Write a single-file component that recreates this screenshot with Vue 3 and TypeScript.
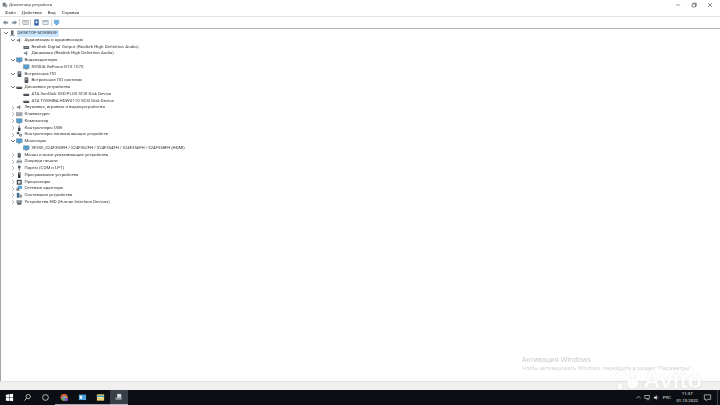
<script setup lang="ts">
type Row = { label: string; level: number; arrow: '' | 'open' | 'closed'; icon: string; selected?: boolean; spacing?: number }

const rows: Row[] = [
  { label: 'DESKTOP-M2K8NSF', level: 0, arrow: 'open', icon: 'pc', selected: true },
  { label: 'Аудиовходы и аудиовыходы', level: 1, arrow: 'open', icon: 'audio' },
  { label: 'Realtek Digital Output (Realtek High Definition Audio)', level: 2, arrow: '', icon: 'speaker', spacing: 0.07 },
  { label: 'Динамики (Realtek High Definition Audio)', level: 2, arrow: '', icon: 'audio' },
  { label: 'Видеоадаптеры', level: 1, arrow: 'open', icon: 'monitor' },
  { label: 'NVIDIA GeForce GTX 1070', level: 2, arrow: '', icon: 'monitor' },
  { label: 'Встроенное ПО', level: 1, arrow: 'open', icon: 'chip' },
  { label: 'Встроенное ПО системы', level: 2, arrow: '', icon: 'chip' },
  { label: 'Дисковые устройства', level: 1, arrow: 'open', icon: 'disk' },
  { label: 'ATA SanDisk SSD PLUS SCSI Disk Device', level: 2, arrow: '', icon: 'disk' },
  { label: 'ATA TOSHIBA HDWD110 SCSI Disk Device', level: 2, arrow: '', icon: 'disk' },
  { label: 'Звуковые, игровые и видеоустройства', level: 1, arrow: 'closed', icon: 'audio' },
  { label: 'Клавиатуры', level: 1, arrow: 'closed', icon: 'keyboard' },
  { label: 'Компьютер', level: 1, arrow: 'closed', icon: 'monitor' },
  { label: 'Контроллеры USB', level: 1, arrow: 'closed', icon: 'usb' },
  { label: 'Контроллеры запоминающих устройств', level: 1, arrow: 'closed', icon: 'storage' },
  { label: 'Мониторы', level: 1, arrow: 'open', icon: 'monitor' },
  { label: 'SF350_S24F350FH / S24F352FH / S24F354FH / S24F356FH / S24F358FH (HDMI)', level: 2, arrow: '', icon: 'monitor', spacing: -0.1 },
  { label: 'Мыши и иные указывающие устройства', level: 1, arrow: 'closed', icon: 'mouse' },
  { label: 'Очереди печати', level: 1, arrow: 'closed', icon: 'printer' },
  { label: 'Порты (COM и LPT)', level: 1, arrow: 'closed', icon: 'port' },
  { label: 'Программные устройства', level: 1, arrow: 'closed', icon: 'software' },
  { label: 'Процессоры', level: 1, arrow: 'closed', icon: 'cpu' },
  { label: 'Сетевые адаптеры', level: 1, arrow: 'closed', icon: 'network' },
  { label: 'Системные устройства', level: 1, arrow: 'closed', icon: 'system' },
  { label: 'Устройства HID (Human Interface Devices)', level: 1, arrow: 'closed', icon: 'hid' }
]

const menu = ['Файл', 'Действие', 'Вид', 'Справка']
</script>

<template>
  <div class="screen">
    <div class="window">
      <header class="titlebar">
        <svg class="title-icon" viewBox="0 0 8 8">
          <rect x="1" y="1" width="4" height="5" fill="#6f7780" />
          <rect x="4" y="3" width="3" height="4" fill="#9aa3ad" />
        </svg>
        <span class="title-text">Диспетчер устройств</span>
        <div class="controls">
          <svg viewBox="0 0 8 8"><path d="M1 4h6" stroke="#8a8a8a" stroke-width="1" /></svg>
          <svg viewBox="0 0 8 8"><path d="M1.5 2.5h4.500v4h-4.500zM3 2.500v-1h4v4h-1" fill="none" stroke="#555" stroke-width=".9" /></svg>
          <svg viewBox="0 0 8 8"><path d="M1.500 1.500l5 5M6.500 1.500l-5 5" stroke="#555" stroke-width=".9" /></svg>
        </div>
      </header>

      <nav class="menubar">
        <span v-for="m in menu" :key="m">{{ m }}</span>
      </nav>

      <div class="toolbar">
        <svg viewBox="0 0 8 8"><path d="M1 4l3-2.500v1.500h3v2h-3v1.500z" fill="#7b8791" /></svg>
        <svg viewBox="0 0 8 8"><path d="M7 4l-3-2.500v1.500h-3v2h3v1.500z" fill="#7b8791" /></svg>
        <i class="sep"></i>
        <svg viewBox="0 0 8 8"><rect x="1" y="1.500" width="6" height="5" fill="#f2f2f2" stroke="#8d949b" stroke-width=".7" /><path d="M2 3h4M2 4.500h4" stroke="#9aa1a8" stroke-width=".6" /></svg>
        <i class="sep"></i>
        <svg viewBox="0 0 8 8"><rect x="1.500" y=".5" width="5" height="7" fill="#2f5ea8" /><rect x="3" y="2" width="2" height="3" fill="#d7e3f5" /></svg>
        <svg viewBox="0 0 8 8"><rect x="1" y="1.500" width="6" height="5" fill="#eef1f4" stroke="#8d949b" stroke-width=".7" /><path d="M2 3h4" stroke="#5f93c9" stroke-width=".8" /></svg>
        <i class="sep"></i>
        <svg viewBox="0 0 8 8"><rect x="1" y="1" width="6" height="4.500" fill="#6bb3e0" /><rect x="3" y="5.500" width="2" height="1.500" fill="#3d86bd" /></svg>
      </div>

      <div class="tree">
        <div v-for="(r, i) in rows" :key="i" class="row" :class="'level-' + r.level">
          <span class="arrow">
            <svg v-if="r.arrow === 'open'" viewBox="0 0 6 6"><path d="M1 2l2 2 2-2" fill="none" stroke="#555" stroke-width=".8" /></svg>
            <svg v-else-if="r.arrow === 'closed'" viewBox="0 0 6 6"><path d="M2 1l2 2-2 2" fill="none" stroke="#a6a6a6" stroke-width=".8" /></svg>
          </span>
          <svg class="icon" viewBox="0 0 8 8">
            <template v-if="r.icon === 'pc'"><rect x="2.500" y=".5" width="3" height="5.500" fill="#5f6870" /><rect x="1" y="6" width="6" height="1.500" fill="#a9b1b9" /></template>
            <template v-else-if="r.icon === 'audio'"><path d="M1 3h2l2-2v6l-2-2h-2z" fill="#7d8790" /><path d="M6 2.500v3" stroke="#b9c0c7" stroke-width=".8" /></template>
            <template v-else-if="r.icon === 'speaker'"><rect x=".5" y="2.500" width="7" height="3.500" rx=".5" fill="#5b636b" /><rect x="2" y="3.500" width="4" height="1" fill="#aab2ba" /></template>
            <template v-else-if="r.icon === 'monitor'"><rect x=".5" y="1" width="7" height="4.800" fill="#4f9fd3" stroke="#6d7882" stroke-width=".5" /><rect x="3" y="5.800" width="2" height="1.400" fill="#7d8790" /></template>
            <template v-else-if="r.icon === 'chip'"><rect x="2" y=".5" width="4.500" height="7" fill="#4f565d" /><rect x="3" y="1.500" width="2.500" height="2" fill="#a8b0b7" /></template>
            <template v-else-if="r.icon === 'disk'"><rect x=".5" y="3.500" width="7" height="2.500" rx=".4" fill="#40464c" /><rect x="1" y="3" width="6" height="1" fill="#c3c8cd" /></template>
            <template v-else-if="r.icon === 'keyboard'"><rect x=".5" y="2" width="7" height="4" fill="#b7bdc3" stroke="#757d85" stroke-width=".5" /><path d="M1.500 3.500h5M1.500 4.800h5" stroke="#6f777f" stroke-width=".5" /></template>
            <template v-else-if="r.icon === 'usb'"><rect x="3" y=".5" width="2" height="2.500" fill="#9da4ab" /><rect x="2.500" y="3" width="3" height="4.500" rx=".6" fill="#3f454b" /></template>
            <template v-else-if="r.icon === 'storage'"><rect x="1" y="1" width="3" height="3" fill="#5a6269" /><circle cx="5.500" cy="5" r="2" fill="#7b848c" /><circle cx="5.500" cy="5" r=".7" fill="#dfe3e6" /></template>
            <template v-else-if="r.icon === 'mouse'"><rect x="2" y=".8" width="4" height="6.600" rx="1.800" fill="#5c646c" /><path d="M4 1v2" stroke="#cfd4d8" stroke-width=".5" /></template>
            <template v-else-if="r.icon === 'printer'"><rect x=".8" y="3" width="6.400" height="3" fill="#7b848c" /><rect x="2" y="1" width="4" height="2" fill="#d8dde1" /><rect x="2" y="5" width="4" height="2" fill="#f1f3f4" stroke="#7b848c" stroke-width=".3" /></template>
            <template v-else-if="r.icon === 'port'"><rect x="2.500" y=".8" width="3" height="3.500" fill="#525a61" /><path d="M4 4.300v3" stroke="#7b848c" stroke-width="1.200" /></template>
            <template v-else-if="r.icon === 'software'"><rect x="2.500" y=".5" width="3" height="7" fill="#2f353a" /><rect x="3.200" y="1.500" width="1.600" height="1.500" fill="#c3c8cd" /></template>
            <template v-else-if="r.icon === 'cpu'"><rect x="1" y="1" width="6" height="6" fill="#3f464c" /><rect x="2.500" y="2.500" width="3" height="3" fill="#e8ecef" /></template>
            <template v-else-if="r.icon === 'network'"><rect x="2" y="1" width="5.500" height="3.800" fill="#58a7d8" /><rect x=".5" y="4" width="3.500" height="3" fill="#6f7880" /></template>
            <template v-else-if="r.icon === 'system'"><rect x="1" y="1" width="3" height="6" fill="#3e6f96" /><rect x="4" y="3" width="3.200" height="4" fill="#8b949c" /></template>
            <template v-else><rect x=".5" y="1.500" width="7" height="3.500" fill="#8c959d" /><rect x="1.500" y="5" width="5" height="2" fill="#4d555c" /></template>
          </svg>
          <span
            class="label"
            :class="{ selected: r.selected }"
            :style="r.spacing ? { letterSpacing: r.spacing + 'px' } : undefined"
          >{{ r.label }}</span>
        </div>
      </div>

      <div class="statusbar"></div>
    </div>

    <footer class="taskbar">
      <div class="task-left">
        <span class="task-btn">
          <svg viewBox="0 0 10 10"><path d="M1 2l3.500-.5V5H1zM5 1.400L9 .8V5H5zM1 5.500h3.500V9L1 8.500zM5 5.500h4v3.700L5 8.600z" fill="#fff" /></svg>
        </span>
        <span class="task-btn">
          <svg viewBox="0 0 10 10"><circle cx="5.800" cy="4" r="2.400" fill="none" stroke="#e8e8e8" stroke-width=".8" /><path d="M4 5.800L1.800 8.400" stroke="#e8e8e8" stroke-width=".9" /></svg>
        </span>
        <span class="task-btn">
          <svg viewBox="0 0 10 10"><circle cx="5" cy="5" r="3.200" fill="none" stroke="#d8d8d8" stroke-width=".9" /></svg>
        </span>
        <span class="task-btn open">
          <svg viewBox="0 0 10 10"><circle cx="4.600" cy="4.800" r="3.800" fill="#d9a441" /><path d="M4.600 1a3.800 3.800 0 0 0-3.300 5.700L3 4.200h4.800A3.800 3.800 0 0 0 4.600 1z" fill="#d5503c" /><path d="M1.300 6.700A3.800 3.800 0 0 0 5 8.600l1-3-3 -1.400z" fill="#55a45a" /><circle cx="4.600" cy="4.800" r="1.500" fill="#7aa7dd" /><circle cx="7" cy="7.200" r="2" fill="#7f55c9" /></svg>
        </span>
        <span class="task-btn open">
          <svg viewBox="0 0 10 10"><rect x="1" y="1.800" width="8" height="6" fill="#4ca3dc" /><rect x="2" y="3" width="2.600" height="3.400" fill="#e8f3fb" /></svg>
        </span>
        <span class="task-btn open">
          <svg viewBox="0 0 10 10"><rect x="1" y="1.500" width="8" height="7" fill="#e9cf76" /><rect x="1" y="3" width="8" height="1.500" fill="#3fa0c8" /><rect x="3.500" y="4.500" width="3" height="1" fill="#fff3c4" /></svg>
        </span>
        <span class="task-btn active">
          <svg viewBox="0 0 10 10"><rect x="3.500" y="1" width="4.500" height="5" fill="#d9dde0" /><rect x="1.500" y="5" width="7" height="2.500" fill="#8f98a0" /></svg>
        </span>
      </div>
      <div class="tray">
        <svg viewBox="0 0 8 8"><path d="M1.500 5l2.500-2.500 2.500 2.500" fill="none" stroke="#ddd" stroke-width=".7" /></svg>
        <svg viewBox="0 0 8 8"><rect x="1" y="1.500" width="5" height="3.500" fill="none" stroke="#ddd" stroke-width=".7" /><path d="M3 6.500h3" stroke="#ddd" stroke-width=".7" /></svg>
        <svg viewBox="0 0 8 8"><path d="M1 3h1.500l1.800-1.500v5L2.500 5H1z" fill="#ddd" /><path d="M5.300 3c.6.600.6 1.500 0 2" fill="none" stroke="#ddd" stroke-width=".6" /></svg>
        <span class="lang">РУС</span>
        <span class="clock"><span>11:37</span><span>01.10.2022</span></span>
        <svg class="notify" viewBox="0 0 10 10"><path d="M1.500 2h7v5h-3.500l-1.500 1.500V7h-2z" fill="none" stroke="#e8e8e8" stroke-width=".7" /></svg>
        <i class="show-desktop"></i>
      </div>
    </footer>

    <div class="activation">
      <div class="act-title">Активация Windows</div>
      <div class="act-sub">Чтобы активировать Windows, перейдите в раздел "Параметры".</div>
    </div>

    <div class="avito">
      <svg viewBox="0 0 30 21">
        <circle cx="8" cy="6" r="5" />
        <circle cx="20" cy="4.500" r="3.200" />
        <circle cx="20.500" cy="14" r="6" />
        <circle cx="7" cy="17" r="3" />
      </svg>
      <span>Avito</span>
    </div>
  </div>
</template>

<style>
html, body { margin: 0; background: #fff; }
</style>

<style scoped>
.screen {
  position: relative;
  width: 720px;
  height: 405px;
  overflow: hidden;
  display: flex;
  flex-direction: column;
  font-family: Roboto, "Liberation Sans", sans-serif;
  color: #333;
  background: #fff;
}
.window {
  flex: 1;
  display: flex;
  flex-direction: column;
  min-height: 0;
  filter: blur(0.3px);
}
.titlebar {
  height: 9px;
  display: flex;
  align-items: center;
  padding-left: 2px;
  font-size: 4.300px;
  color: #444;
}
.title-icon { width: 6px; height: 6px; margin-right: 1px; }
.title-text { flex: 1; }
.controls { display: flex; gap: 10px; padding-right: 7px; padding-top: 1px; }
.controls svg { width: 6px; height: 6px; }
.menubar {
  height: 7px;
  display: flex;
  align-items: center;
  gap: 6px;
  padding-left: 5px;
  font-size: 4.400px;
  color: #333;
}
.toolbar {
  height: 11px;
  display: flex;
  align-items: center;
  gap: 2px;
  padding-left: 1.500px;
  border-top: 1px solid #e4e4e4;
  border-bottom: 1px solid #b4b4b4;
}
.toolbar svg { width: 7px; height: 7px; flex: none; }
.sep { width: 1px; height: 7px; background: #d5d5d5; margin: 0 -.4px; flex: none; }
.tree {
  flex: 1;
  min-height: 0;
  padding-top: 1px;
  border-left: 1px solid #a6a6a6;
  font-size: 4.400px;
}
.row {
  height: 6.760px;
  display: flex;
  align-items: center;
  white-space: nowrap;
}
.level-0 { padding-left: 2px; }
.level-1 { padding-left: 9px; }
.level-2 { padding-left: 16px; }
.arrow { width: 6px; height: 6px; display: flex; flex: none; }
.arrow svg { width: 6px; height: 6px; }
.icon { width: 6.500px; height: 6.500px; flex: none; margin-right: 1px; }
.label { padding: 0 1px; line-height: 6.500px; color: #3a3a3a; }
.label.selected { background: #cce8ff; }
.statusbar {
  height: 9px;
  background: #f0f0f0;
  border-top: 1px solid #e2e2e2;
  box-sizing: border-box;
}
.taskbar {
  height: 15px;
  background: #0b0f14;
  display: flex;
  justify-content: space-between;
  align-items: stretch;
}
.task-left { display: flex; }
.task-btn {
  width: 18.300px;
  display: flex;
  align-items: center;
  justify-content: center;
  box-sizing: border-box;
}
.task-btn svg { width: 9px; height: 9px; }
.task-btn.open { border-bottom: 1px solid #9aa5b5; }
.task-btn.active { background: #3a3f47; border-bottom: 1px solid #a9b6cc; }
.tray {
  display: flex;
  align-items: center;
  gap: 2px;
  color: #e8e8e8;
  font-size: 4.300px;
}
.tray svg { width: 7px; height: 7px; }
.lang { margin: 0 3.500px 0 1px; }
.clock {
  display: flex;
  flex-direction: column;
  align-items: center;
  line-height: 6.500px;
  margin-right: 3px;
}
.tray .notify { width: 9px; height: 9px; }
.show-desktop {
  width: 1px;
  height: 15px;
  background: #3a3f47;
  margin: 0 2px 0 3px;
}
.activation {
  position: absolute;
  left: 522px;
  top: 355px;
  color: #c9c9c9;
  font-family: "Noto Sans", sans-serif;
}
.act-title { font-size: 7.100px; line-height: 9.500px; }
.act-sub { font-size: 5.400px; line-height: 6px; white-space: nowrap; color: #d2d2d2; }
.avito {
  position: absolute;
  left: 613px;
  top: 370px;
  display: flex;
  align-items: center;
  color: rgba(255, 255, 255, 0.9);
  font-family: "Liberation Sans", sans-serif;
  font-weight: 700;
  font-size: 24px;
  line-height: 20px;
  height: 20px;
  filter: drop-shadow(0 0 1px rgba(0, 0, 0, 0.12));
}
.avito svg { width: 29px; height: 20px; fill: rgba(255, 255, 255, 0.9); flex: none; margin-right: 1px; }
</style>
